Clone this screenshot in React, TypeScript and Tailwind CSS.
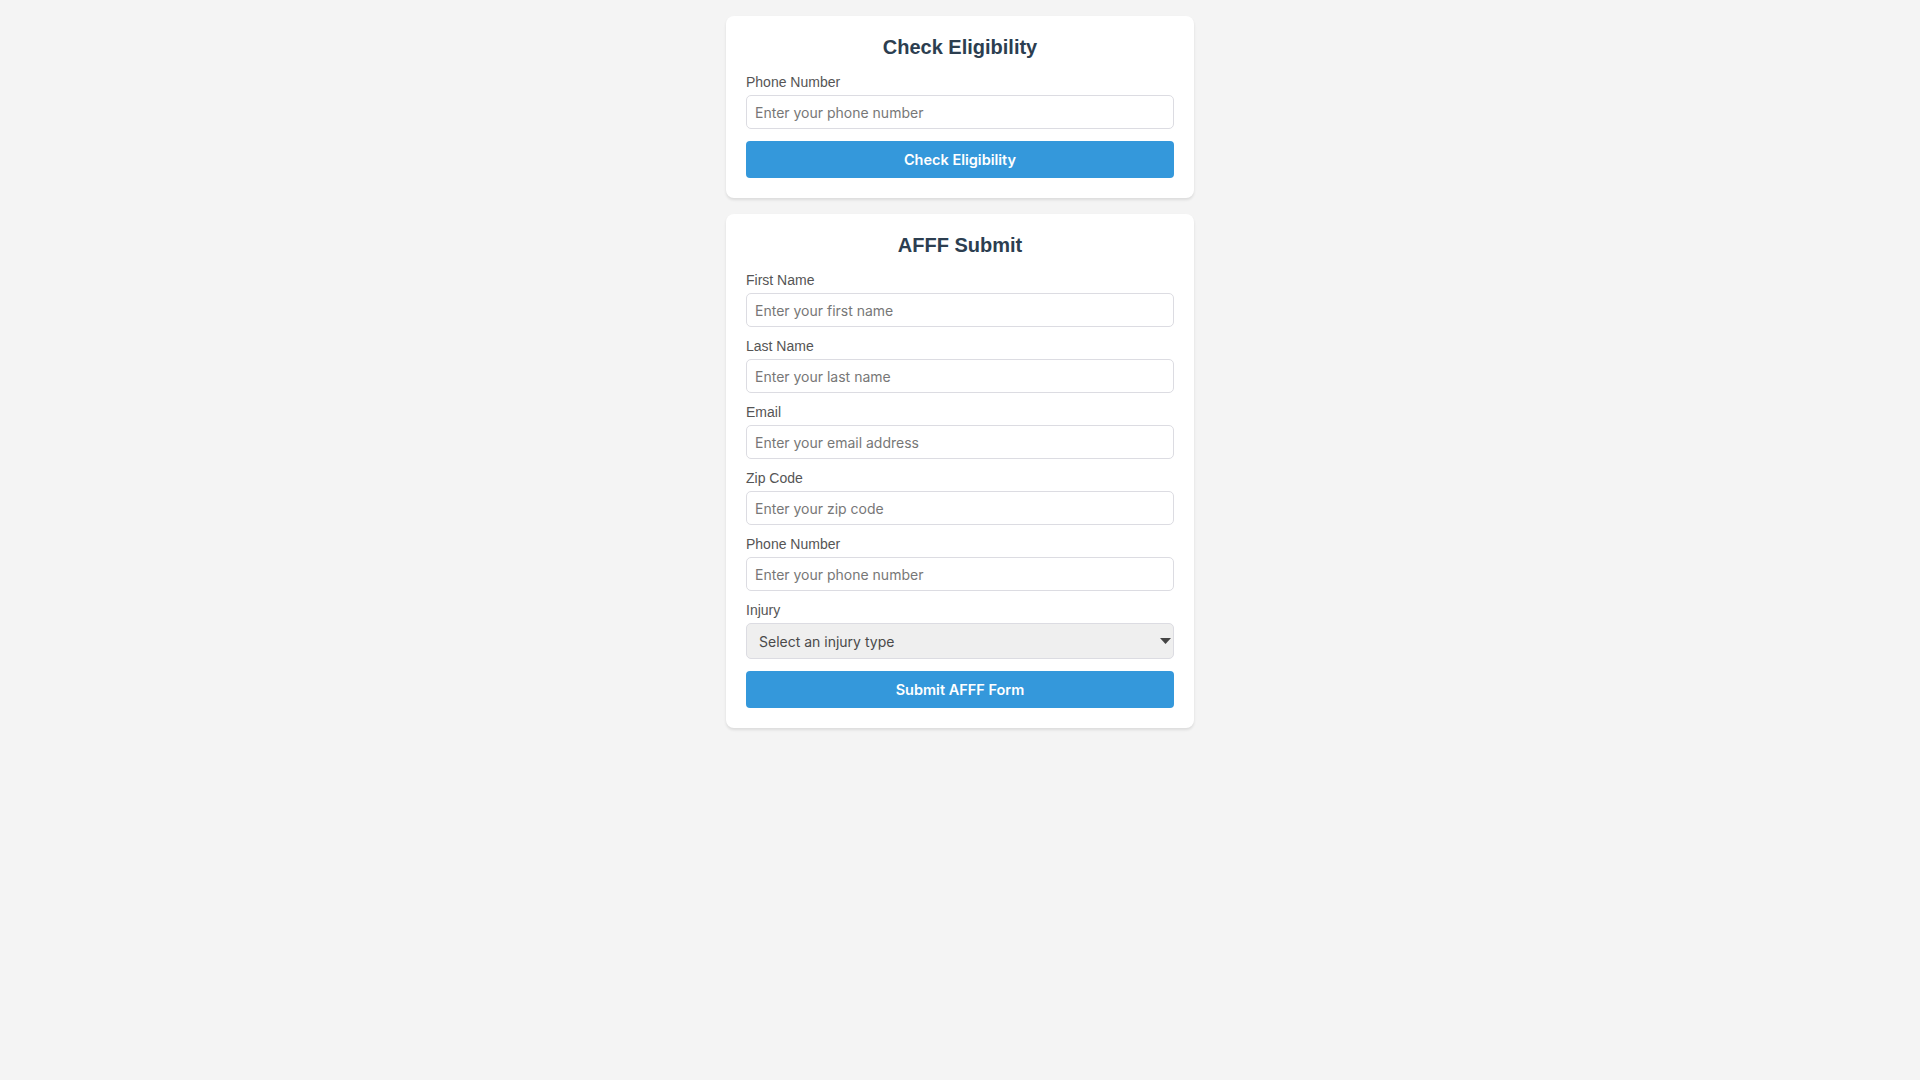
import { useState } from "react";

const inputClass =
  "h-[34px] w-full rounded-[5px] border border-[#dcdce2] bg-white px-[8px] font-['Inter',sans-serif] text-[14px] text-[#333] placeholder:text-[#777] outline-none";

const buttonClass =
  "h-[37px] w-full rounded-[4px] bg-[#3498db] pt-[1px] font-['Inter',sans-serif] text-[14.5px] font-semibold text-white";

function Field({
  label,
  placeholder,
  value,
  onChange,
}: {
  label: string;
  placeholder: string;
  value: string;
  onChange: (v: string) => void;
}) {
  return (
    <div className="mb-[12px] flex flex-col">
      <label className="mb-[5px] text-[14px] leading-[15px] text-[#555]">{label}</label>
      <input
        className={inputClass}
        placeholder={placeholder}
        value={value}
        onChange={(e) => onChange(e.target.value)}
      />
    </div>
  );
}

export default function App() {
  const [checkPhone, setCheckPhone] = useState("");
  const [form, setForm] = useState({
    firstName: "",
    lastName: "",
    email: "",
    zip: "",
    phone: "",
    injury: "",
  });

  function update(key: keyof typeof form, value: string) {
    setForm({ ...form, [key]: value });
  }

  return (
    <main className="min-h-screen bg-[#f4f4f4] pt-[16px] font-['Liberation_Sans',Arial,sans-serif]">
      <div className="mx-auto flex w-[468px] flex-col gap-[16px]">
        <section className="rounded-[8px] bg-white p-[20px] shadow-[0_2px_3px_rgba(0,0,0,0.1)]">
          <h2 className="mb-[16px] text-center text-[20px] leading-[23px] font-bold text-[#2c3e50]">
            Check Eligibility
          </h2>
          <Field
            label="Phone Number"
            placeholder="Enter your phone number"
            value={checkPhone}
            onChange={setCheckPhone}
          />
          <button className={buttonClass}>Check Eligibility</button>
        </section>

        <section className="rounded-[8px] bg-white p-[20px] shadow-[0_2px_3px_rgba(0,0,0,0.1)]">
          <h2 className="mb-[16px] text-center text-[20px] leading-[23px] font-bold text-[#2c3e50]">
            AFFF Submit
          </h2>
          <Field
            label="First Name"
            placeholder="Enter your first name"
            value={form.firstName}
            onChange={(v) => update("firstName", v)}
          />
          <Field
            label="Last Name"
            placeholder="Enter your last name"
            value={form.lastName}
            onChange={(v) => update("lastName", v)}
          />
          <Field
            label="Email"
            placeholder="Enter your email address"
            value={form.email}
            onChange={(v) => update("email", v)}
          />
          <Field
            label="Zip Code"
            placeholder="Enter your zip code"
            value={form.zip}
            onChange={(v) => update("zip", v)}
          />
          <Field
            label="Phone Number"
            placeholder="Enter your phone number"
            value={form.phone}
            onChange={(v) => update("phone", v)}
          />
          <div className="mb-[12px] flex flex-col">
            <label className="mb-[5px] text-[14px] leading-[15px] text-[#555]">Injury</label>
            <div className="relative">
              <select
                className="h-[36px] w-full appearance-none rounded-[5px] border border-[#dcdce2] bg-[#efefef] pl-[12px] font-['Inter',sans-serif] text-[14px] text-[#4a4a4a] outline-none"
                value={form.injury}
                onChange={(e) => update("injury", e.target.value)}
              >
                <option value="">Select an injury type</option>
                <option value="kidney">Kidney Cancer</option>
                <option value="liver">Liver Cancer</option>
                <option value="thyroid">Thyroid Disease</option>
              </select>
              <svg
                className="pointer-events-none absolute top-[15px] right-[3px]"
                width="11"
                height="6"
                viewBox="0 0 11 6"
              >
                <path d="M0 0h11L5.5 6z" fill="#444" />
              </svg>
            </div>
          </div>
          <button className={buttonClass}>Submit AFFF Form</button>
        </section>
      </div>
    </main>
  );
}
